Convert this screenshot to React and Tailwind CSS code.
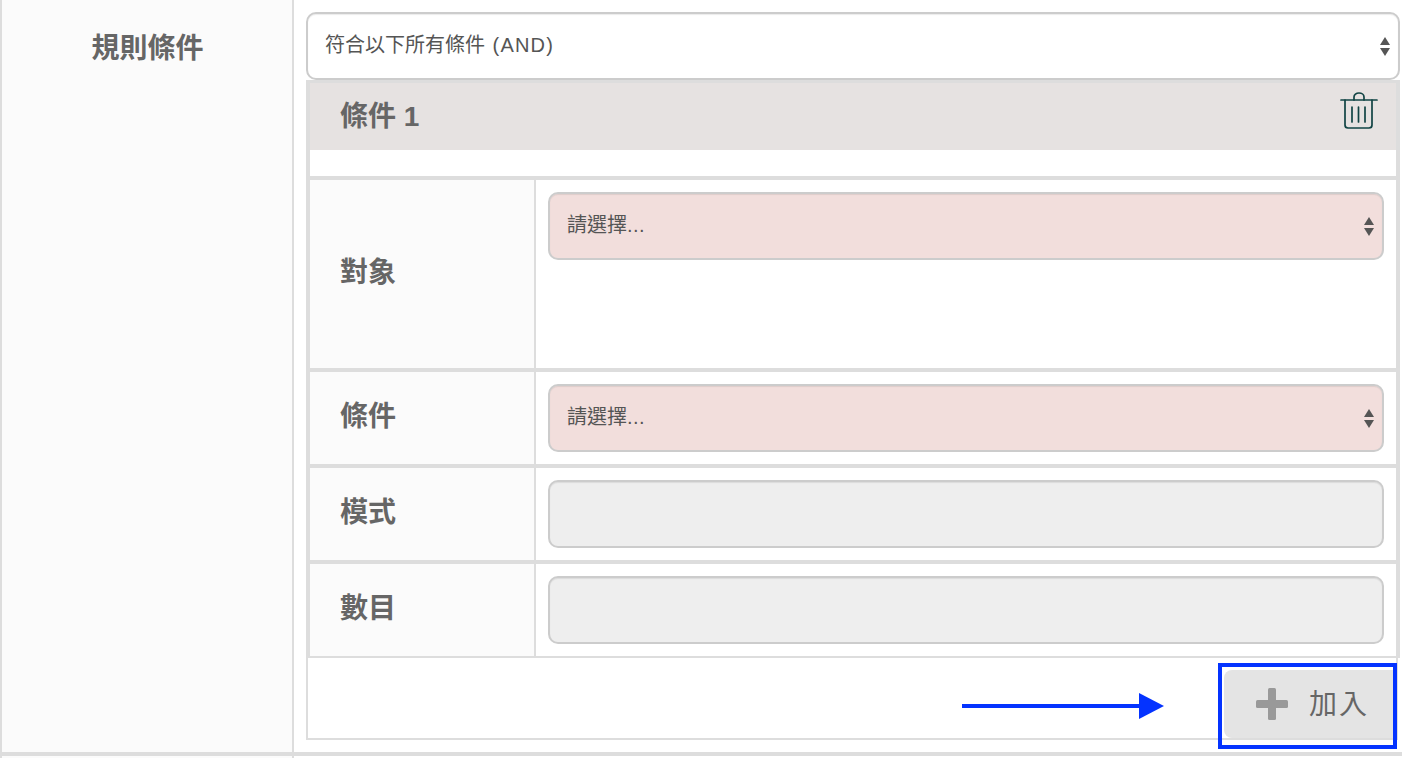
const FONT = "font-['Liberation_Sans','Noto_Sans_CJK_TC','Noto_Sans_CJK_SC',sans-serif]";

function Arrows() {
  return (
    <svg width="10" height="19" viewBox="0 0 10 19" className="shrink-0" fill="#555">
      <path d="M5 0 L10 8 L0 8 Z" />
      <path d="M5 19 L10 11 L0 11 Z" />
    </svg>
  );
}

function Field({ children, tone = "white", arrows = true, className = "" }) {
  const bg = tone === "pink" ? "bg-[#f2dedc]" : tone === "gray" ? "bg-[#eeeeee]" : "bg-white";
  return (
    <div
      className={`h-[68px] rounded-[10px] border-2 border-[#cccccc] shadow-[inset_0_1px_1px_rgba(0,0,0,0.08)] flex items-center justify-between ${bg} ${className}`}
    >
      {children ? <span className="text-[20px] leading-none text-[#555555] -mt-[3px]">{children}</span> : <span />}
      {arrows ? <Arrows /> : null}
    </div>
  );
}

function Row({ label, className, children }) {
  return (
    <div className={`flex ${className}`}>
      <div className="w-[226px] shrink-0 bg-[#fbfbfb] border-r-2 border-[#dddddd] flex items-center pl-[30px]">
        <span className="text-[28px] font-bold leading-none text-[#666666] -mt-[3px]">{label}</span>
      </div>
      <div className="flex-1 bg-white pt-3 px-3">{children}</div>
    </div>
  );
}

function TrashIcon() {
  return (
    <svg width="38" height="40" viewBox="0 0 38 40" fill="none" stroke="#114444" strokeWidth="1.7" strokeLinecap="round" strokeLinejoin="round">
      <path d="M1 9 H37" />
      <path d="M14 9 V6 A5 4 0 0 1 24 6 V9" />
      <path d="M5 9 V34 Q5 37 8 37 H29 Q32 37 32 34 V9" />
      <path d="M12 16 V31" />
      <path d="M18.5 16 V31" />
      <path d="M25 16 V31" />
    </svg>
  );
}

export default function App() {
  return (
    <div className={`w-[1402px] h-[758px] overflow-hidden bg-white ${FONT}`}>
      <div className="flex h-[756px] border-b-4 border-[#dddddd]">
        <div className="w-[294px] shrink-0 bg-[#fbfbfb] border-l-2 border-r-2 border-[#dddddd] text-center pt-[35px]">
          <span className="text-[28px] font-bold leading-none text-[#666666] pl-[1px]">規則條件</span>
        </div>
        <div className="flex-1 bg-white pt-3 pl-3 pr-[2px]">
          <Field className="pl-[17px] pr-[8px]">
            符合以下所有條件 <span className="tracking-[1.2px] ml-[2px]">(AND)</span>
          </Field>
          <div className="border-x-4 border-t-[3px] border-[#dddddd]">
            <div className="h-[67px] bg-[#e6e2e1] flex items-center justify-between pl-[30px] pr-[18px]">
              <span className="text-[28px] font-bold leading-none text-[#666666]">條件 1</span>
              <div className="-mt-[11px]"><TrashIcon /></div>
            </div>
            <div className="h-[30px] bg-white border-b-4 border-[#dddddd]" />
            <Row label="對象" className="h-[192px] border-b-4 border-[#dddddd]">
              <Field tone="pink" className="pl-[17px] pr-[8px]">請選擇<span className="tracking-[0.4px]">...</span></Field>
            </Row>
            <Row label="條件" className="h-[96px] border-b-4 border-[#dddddd]">
              <Field tone="pink" className="pl-[17px] pr-[8px]">請選擇<span className="tracking-[0.4px]">...</span></Field>
            </Row>
            <Row label="模式" className="h-[96px] border-b-4 border-[#dddddd]">
              <Field tone="gray" arrows={false} />
            </Row>
            <Row label="數目" className="h-[94px] border-b-2 border-[#dddddd]">
              <Field tone="gray" arrows={false} />
            </Row>
          </div>
          <div className="relative h-[82px] mr-[2px] border-x-2 border-b-2 border-[#dddddd] bg-white flex justify-end pt-3 pr-[3px]">
            <button className="w-[169px] h-[68px] rounded-l-[8px] bg-[#e4e4e4] flex items-center pl-[32px] gap-[21px]">
              <svg width="32" height="32" viewBox="0 0 32 32" fill="#999999" className="shrink-0">
                <rect x="12" y="0" width="8" height="32" rx="1.5" />
                <rect x="0" y="12" width="32" height="8" rx="1.5" />
              </svg>
              <span className="text-[28px] leading-none text-[#666666] tracking-[2px] mt-[1px]">加入</span>
            </button>
            <div className="absolute left-[910px] top-[5px] w-[179px] h-[86px] border-4 border-[#0433ff]" />
            <svg width="204" height="26" viewBox="0 0 204 26" className="absolute left-[654px] top-[35px]">
              <rect x="0" y="11" width="178" height="4" fill="#0433ff" />
              <path d="M177 0 L202 13 L177 26 Z" fill="#0433ff" />
            </svg>
          </div>
        </div>
      </div>
      <div className="flex h-[2px]">
        <div className="w-[294px] shrink-0 border-l-2 border-r-2 border-[#dddddd] bg-[#fbfbfb]" />
      </div>
    </div>
  );
}
